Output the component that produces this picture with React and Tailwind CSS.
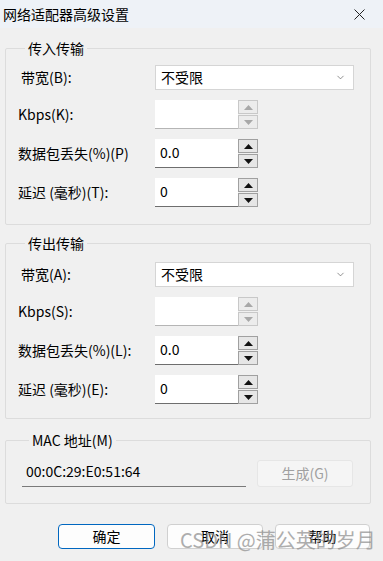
import { ChevronDown } from "lucide-react";

const font = {
  fontFamily: '"Noto Sans CJK SC", "Noto Sans", sans-serif',
};

function Spin({ disabled }) {
  const arrow = disabled ? "fill-[#a8a8a8]" : "fill-[#111]";
  const box = disabled
    ? "border-[#c8c8c8] bg-[#ececec]"
    : "border-[#a0a0a0] bg-[#e6e6e6]";
  return (
    <div className="flex flex-col w-[20px] h-[29px] gap-[1px]">
      <div className={`flex-1 border flex items-center justify-center ${box}`}>
        <svg width="9" height="5" viewBox="0 0 9 5">
          <polygon points="0,5 4.5,0 9,5" className={arrow} />
        </svg>
      </div>
      <div className={`flex-1 border flex items-center justify-center ${box}`}>
        <svg width="9" height="5" viewBox="0 0 9 5">
          <polygon points="0,0 4.5,5 9,0" className={arrow} />
        </svg>
      </div>
    </div>
  );
}

function SpinRow({ label, value, disabled }) {
  return (
    <div className="flex items-center h-[29px]">
      <div className="w-[137px] text-[14px] text-black">{label}</div>
      <div
        className={`w-[83px] h-[29px] bg-white border-b ${
          disabled ? "border-[#b5b5b5]" : "border-[#6e6e6e]"
        } px-[5px] pt-[3px] text-[14px] leading-[20px] text-black`}
      >
        {value}
      </div>
      <Spin disabled={disabled} />
    </div>
  );
}

function BandRow({ label }) {
  return (
    <div className="flex items-center h-[25px]">
      <div className="w-[137px] pl-[3px] text-[14px] text-black">{label}</div>
      <div className="w-[199px] h-[25px] bg-white border border-[#d5d5d5] flex items-center justify-between px-[5px]">
        <span className="text-[14px] text-black">不受限</span>
        <ChevronDown size={11} strokeWidth={1.4} className="text-[#555] mr-[2px]" />
      </div>
    </div>
  );
}

function Group({ title, children, className }) {
  return (
    <fieldset
      className={`ml-[5px] w-[366px] border border-[#dcdcdc] rounded-[2px] ${className}`}
    >
      <legend className="ml-[7px] px-[3px] text-[14px] leading-[20px] text-black">
        {title}
      </legend>
      {children}
    </fieldset>
  );
}

export default function App() {
  return (
    <div
      className="relative w-[383px] h-[561px] bg-[#f0f0f0] overflow-hidden"
      style={font}
    >
      {/* title bar */}
      <div className="h-[28px] bg-[#eef2f7] flex items-center justify-between pl-[3px] pr-[18px]">
        <span className="text-[14px] text-black">网络适配器高级设置</span>
        <svg width="11" height="11" viewBox="0 0 11 11">
          <path d="M0.5 0.5 L10.5 10.5 M10.5 0.5 L0.5 10.5" stroke="#222" strokeWidth="1" />
        </svg>
      </div>

      <Group title="传入传输" className="mt-[10px] pl-[12px] pt-[7px] pb-[17px]">
        <div className="flex flex-col gap-[10px]">
          <BandRow label="带宽(B):" />
          <SpinRow label="Kbps(K):" value="" disabled />
          <SpinRow label="数据包丢失(%)(P)" value="0.0" />
          <SpinRow label="延迟 (毫秒)(T):" value="0" />
        </div>
      </Group>

      <Group title="传出传输" className="mt-[8px] pl-[12px] pt-[9px] pb-[14px]">
        <div className="flex flex-col gap-[10px]">
          <BandRow label="带宽(A):" />
          <SpinRow label="Kbps(S):" value="" disabled />
          <SpinRow label="数据包丢失(%)(L):" value="0.0" />
          <SpinRow label="延迟 (毫秒)(E):" value="0" />
        </div>
      </Group>

      <Group title="MAC 地址(M)" className="mt-[11px] pl-[16px] pt-[9px] pb-[16px]">
        <div className="flex items-center gap-[11px]">
          <div className="w-[224px] h-[28px] bg-[#f0f0f0] border-b border-[#7a7a7a] px-[4px] text-[14px] leading-[24px] text-black">
            00:0C:29:E0:51:64
          </div>
          <div className="w-[96px] h-[27px] bg-[#f5f5f5] border border-[#e6e6e6] rounded-[3px] flex items-center justify-center text-[14px] text-[#a0a0a0]">
            生成(G)
          </div>
        </div>
      </Group>

      {/* bottom buttons */}
      <div className="mt-[20px] flex justify-end gap-[12px] pr-[13px]">
        <div className="w-[97px] h-[25px] bg-[#fdfdfd] border border-[#0067c0] rounded-[4px] flex items-center justify-center text-[14px] text-black">
          确定
        </div>
        <div className="w-[96px] h-[25px] bg-[#fdfdfd] border border-[#d0d0d0] rounded-[4px] flex items-center justify-center text-[14px] text-black">
          取消
        </div>
        <div className="w-[95px] h-[25px] bg-[#fdfdfd] border border-[#d0d0d0] rounded-[4px] flex items-center justify-center text-[14px] text-black">
          帮助
        </div>
      </div>

      {/* watermark */}
      <div className="absolute left-[180px] top-[527px] text-[20px] leading-[26px] text-[#8c8c8c] opacity-70 whitespace-nowrap">
        CSDN @蒲公英的岁月
      </div>
    </div>
  );
}
